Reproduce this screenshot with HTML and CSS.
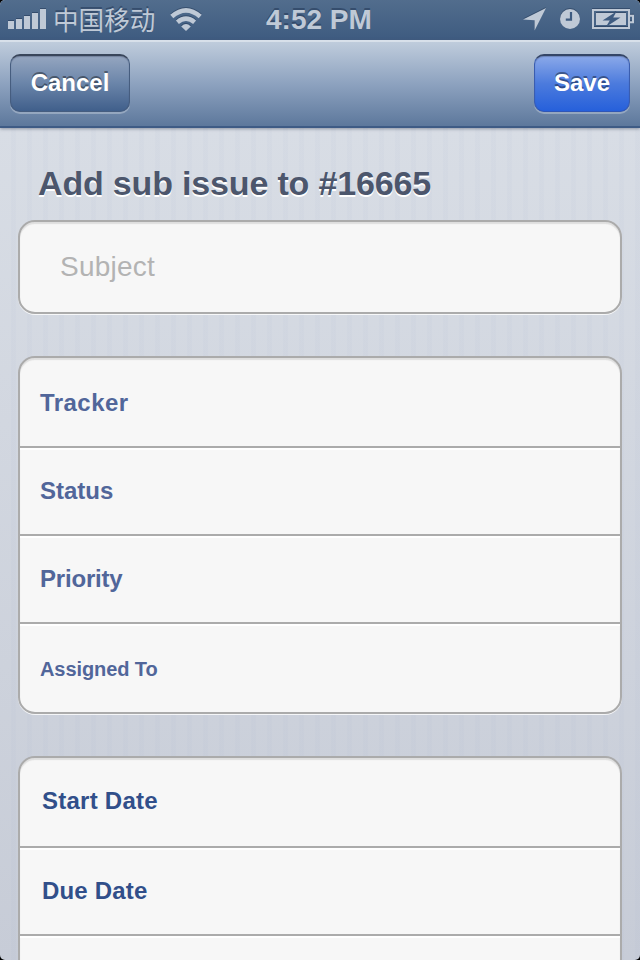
FILE: index.html
```html
<!DOCTYPE html>
<html lang="en">
<head>
<meta charset="utf-8">
<title>Add sub issue</title>
<link rel="stylesheet" href="styles.css">
</head>
<body>
<div class="screen">
  <header class="status">
    <svg class="signal" width="39" height="22" viewBox="0 0 39 22"><path d="M0 13h6v8H0zM8 11h6v10H8zM16 8h6v13h-6zM24 5h6v16h-6zM32 1h6v20h-6z"/></svg>
    <span class="carrier">中国移动</span>
    <svg class="wifi" width="32" height="24" viewBox="0 0 32 24"><path class="arc" d="M1.8 8.6Q16-3.8 30.2 8.6M7.4 14.2Q16 7.2 24.6 14.2"/><path d="M11.2 18.4Q16 13.6 20.8 18.4L16 23z"/></svg>
    <span class="time">4:52 PM</span>
    <svg class="location" width="24" height="24" viewBox="0 0 24 24"><path d="M23 0 11.6 22.5V12.2L0 11.4z"/></svg>
    <svg class="clock" width="20" height="20" viewBox="0 0 20 20"><circle cx="10" cy="10" r="10"/><path class="cut" d="M11 3v7.6H5.8"/></svg>
    <svg class="battery" width="42" height="20" viewBox="0 0 42 20"><path class="case" d="M1 1h36v18H1zM38 6.8h3v6.4h-3"/><path d="M4 4h30v12H4z"/><path class="bolt" d="M24.5 2.5 10.5 11.6h7.3l-4 6.4L28.5 8.6h-7.3z"/></svg>
  </header>
  <nav class="bar">
    <button class="btn cancel"><span>Cancel</span></button>
    <button class="btn save"><span>Save</span></button>
  </nav>
  <main>
    <h1><span>Add sub issue to #16665</span></h1>
    <section class="card subject"><span>Subject</span></section>
    <section class="card fields">
      <div class="row"><span class="tracker">Tracker</span></div>
      <div class="row"><span>Status</span></div>
      <div class="row priority"><span>Priority</span></div>
      <div class="row small"><span>Assigned To</span></div>
    </section>
    <section class="card dates">
      <div class="row start"><span>Start Date</span></div>
      <div class="row due"><span>Due Date</span></div>
      <div class="row"></div>
    </section>
  </main>
</div>
</body>
</html>
```
FILE: styles.css
```css
* { box-sizing: border-box; }
html, body { margin: 0; background: #000; }
body { font-family: "Liberation Sans", "Noto Sans CJK SC", sans-serif; }
.screen {
  width: 640px;
  height: 960px;
  overflow: hidden;
  border-radius: 5px;
  background:
    repeating-linear-gradient(90deg, transparent 0 11px, rgba(150,165,200,.05) 11px 16px),
    linear-gradient(#d8dde5 128px, #c7ccd7 960px);
}
.status {
  display: flex;
  height: 40px;
  padding: 0 6px 0 8px;
  background: linear-gradient(#526d8d, #3e5b80);
  color: #bfc9d6;
}
.status svg { flex: none; fill: #bfc9d6; filter: drop-shadow(0 -1px 0 rgba(30,50,80,.5)); }
.status span { flex: none; white-space: nowrap; line-height: 40px; text-shadow: 0 -2px 0 rgba(30,50,80,.5); }
.signal { margin-top: 8px; }
.carrier { width: 106px; margin-left: 6px; font-family: "Noto Sans CJK SC", sans-serif; font-size: 25.6px; }
.status .carrier { line-height: 37px; }
.wifi { margin: 8px 0 0 11px; }
.wifi .arc { fill: none; stroke: #bfc9d6; stroke-width: 4.6; }
.time { width: 107px; margin-left: 64px; font-size: 28px; font-weight: bold; }
.location { margin: 8px 0 0 150px; }
.clock { margin: 9px 0 0 13px; }
.clock .cut { fill: none; stroke: #3e5b80; stroke-width: 2.2; }
.battery { margin: 9px 0 0 12px; }
.battery .case { fill: none; stroke: #bfc9d6; stroke-width: 2; }
.battery .bolt { fill: #3e5b80; }
.bar {
  display: flex;
  justify-content: space-between;
  height: 88px;
  padding: 14px 10px 0;
  border-top: 2px solid #d8e0ea;
  border-bottom: 2px solid #3e5b85;
  background: linear-gradient(#bfccdc, #8da2bf 50%, #5d789c);
  box-shadow: 0 1px 3px rgba(80,90,110,.55);
}
.btn {
  height: 58px;
  margin-top: -2px;
  padding: 0 0 2px;
  border: 1px solid #465d7f;
  border-top: 2px solid #39465b;
  border-radius: 10px;
  background: linear-gradient(#95a6c0, #6c86aa 48%, #405f8b);
  box-shadow: 0 2px 0 rgba(255,255,255,.28), inset 0 1px 1px rgba(40,50,80,.3);
  color: #fff;
  font: bold 24px/53px "Liberation Sans", sans-serif;
  text-shadow: 0 -2px 0 rgba(0,0,0,.4);
}
.cancel { width: 120px; }
.save { width: 96px; border-color: #354667 #3a5db0 #3056b5; background: linear-gradient(#8ba9e9, #4c7bdd 50%, #2660db); }
main { padding: 0 18px; }
h1 {
  height: 92px;
  margin: 0;
  padding: 35px 0 0 20px;
  color: #4c566c;
  font-size: 34px;
  letter-spacing: -.17px;
  line-height: 40px;
  text-shadow: 0 2px 0 #fff;
}
.card {
  overflow: hidden;
  border: 2px solid #ababab;
  border-radius: 17px;
  background: #f7f7f7;
  box-shadow: 0 1px 0 rgba(255,255,255,.8), inset 0 2px 1px #dedede;
}
.subject { height: 94px; padding-left: 40px; color: #b3b3b3; font-size: 28px; letter-spacing: .25px; line-height: 90px; }
.fields { height: 358px; margin-top: 42px; }
.dates { height: 300px; margin-top: 42px; }
.row {
  height: 88px;
  padding-left: 20px;
  border-bottom: 2px solid #ababab;
  box-shadow: inset 0 2px 0 #fff;
  color: #51669a;
  font-size: 24px;
  font-weight: bold;
  line-height: 86px;
}
.row:first-child { height: 90px; line-height: 90px; box-shadow: none; }
.row:last-child { border-bottom: 0; }
.row.small { font-size: 20px; letter-spacing: -.08px; line-height: 90px; }
.tracker { letter-spacing: .45px; }
.priority { letter-spacing: -.2px; }
.dates .row { padding-left: 22px; color: #314f8a; }
.dates .start { letter-spacing: .25px; line-height: 86px; }
.due { letter-spacing: .18px; }
```
